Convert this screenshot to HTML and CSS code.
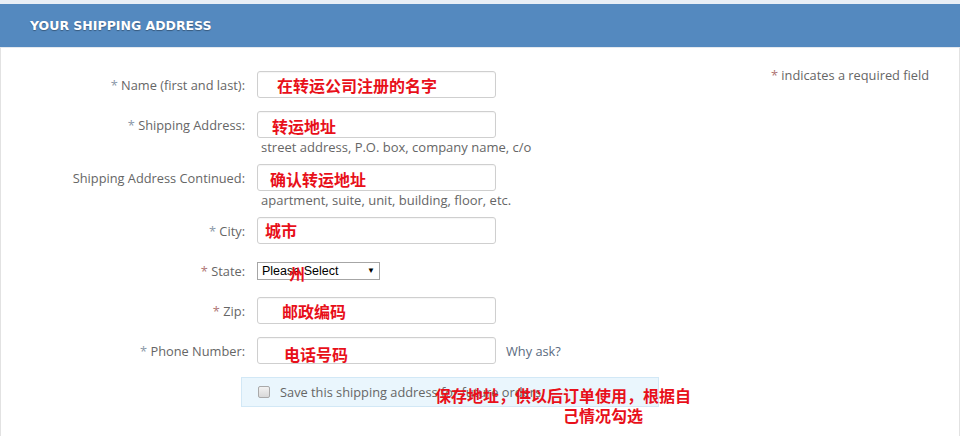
FILE: index.html
```html
<!DOCTYPE html>
<html>
<head>
<meta charset="utf-8">
<link rel="stylesheet" href="styles.css">
</head>
<body>
<div class="page">
  <div class="header">YOUR SHIPPING ADDRESS</div>
  <div class="panel">
    <div class="required-note"><span class="ast red">*</span> indicates a required field</div>
    <form class="form">
      <div class="row">
        <label class="label"><span class="ast">*</span> Name (first and last):</label>
        <div class="field">
          <div class="wrap"><input class="input" type="text"><span class="note n-name">在转运公司注册的名字</span></div>
        </div>
      </div>
      <div class="row">
        <label class="label"><span class="ast">*</span> Shipping Address:</label>
        <div class="field">
          <div class="wrap"><input class="input" type="text"><span class="note n-addr">转运地址</span></div>
          <div class="hint">street address, P.O. box, company name, c/o</div>
        </div>
      </div>
      <div class="row">
        <label class="label">Shipping Address Continued:</label>
        <div class="field">
          <div class="wrap"><input class="input" type="text"><span class="note n-cont">确认转运地址</span></div>
          <div class="hint">apartment, suite, unit, building, floor, etc.</div>
        </div>
      </div>
      <div class="row">
        <label class="label"><span class="ast">*</span> City:</label>
        <div class="field">
          <div class="wrap"><input class="input" type="text"><span class="note n-city">城市</span></div>
        </div>
      </div>
      <div class="row">
        <label class="label"><span class="ast red">*</span> State:</label>
        <div class="field field-select">
          <div class="wrap">
            <div class="select"><span class="select-text">Please Select</span><span class="arrow">▼</span></div>
            <span class="note n-state">州</span>
          </div>
        </div>
      </div>
      <div class="row">
        <label class="label"><span class="ast red">*</span> Zip:</label>
        <div class="field">
          <div class="wrap"><input class="input" type="text"><span class="note n-zip">邮政编码</span></div>
        </div>
      </div>
      <div class="row">
        <label class="label"><span class="ast">*</span> Phone Number:</label>
        <div class="field field-inline">
          <div class="wrap"><input class="input" type="text"><span class="note n-phone">电话号码</span></div>
          <a class="why">Why ask?</a>
        </div>
      </div>
      <div class="save">
        <span class="checkbox"></span>
        <span class="save-text">Save this shipping address for future orders.</span>
        <span class="note n-save"><span class="l1">保存地址，供以后订单使用，根据自</span><span class="l2">己情况勾选</span></span>
      </div>
    </form>
  </div>
</div>
</body>
</html>
```

FILE: styles.css
```css
* { box-sizing: border-box; }
html, body { margin: 0; padding: 0; background: #fff; }
body { font-family: "Open Sans", "DejaVu Sans", sans-serif; font-size: 12.8px; color: #666; }

.page { width: 960px; height: 436px; background: #e8eef5; padding-top: 4px; overflow: hidden; }

.header {
  height: 43px;
  background: #5489bf;
  color: #fff;
  font-family: "DejaVu Sans", Verdana, sans-serif;
  font-weight: bold;
  font-size: 12.5px;
  line-height: 43px;
  padding-left: 30px;
  text-shadow: 0 1px 1px rgba(0,0,0,0.35);
}

.panel {
  position: relative;
  background: #fff;
  border-left: 1px solid #e2e2e2;
  border-right: 1px solid #e2e2e2;
  border-top: 1px solid #e4e9ef;
  height: 389px;
  padding-top: 23px;
}

.required-note {
  position: absolute;
  right: 30px;
  top: 18px;
  color: #666;
}

.ast { color: #8b98a8; }
.ast.red { color: #b07676; }

.form { display: flex; flex-direction: column; gap: 13px; }

.row { display: flex; align-items: flex-start; }

.label {
  width: 245px;
  text-align: right;
  line-height: 29px;
  height: 27px;
  padding-right: 1px;
  color: #666;
  white-space: nowrap;
}

.field { margin-left: 11px; display: flex; flex-direction: column; }
.field-inline { flex-direction: row; align-items: center; }
.field-select { height: 27px; justify-content: center; }

.wrap { position: relative; }

.input {
  display: block;
  width: 239px;
  height: 27px;
  border: 1px solid #cfcfcf;
  border-radius: 3px;
  background: #fff;
  margin: 0;
  padding: 0;
  box-shadow: inset 0 1px 1px rgba(0,0,0,0.04);
}

.hint { height: 13px; line-height: 18px; padding-left: 4px; color: #666; white-space: nowrap; font-size: 13px; }

.why { margin-left: 10px; color: #5b6b80; }

.select {
  display: flex;
  align-items: center;
  justify-content: space-between;
  width: 123px;
  height: 18px;
  border: 1px solid #a6a6a6;
  background: #fff;
  font-family: "Liberation Sans", Arial, sans-serif;
  font-size: 12.5px;
  color: #000;
  padding: 0 4px 0 4px;
}
.arrow { font-size: 8px; line-height: 1; }

.note {
  position: absolute;
  font-family: "Noto Sans CJK SC", sans-serif;
  font-weight: bold;
  font-size: 16px;
  line-height: 20px;
  color: #e8101a;
  white-space: nowrap;
  pointer-events: none;
}
.n-name { left: 20px; top: 4px; }
.n-addr { left: 15px; top: 5px; }
.n-cont { left: 13px; top: 5px; }
.n-city { left: 8px; top: 3px; }
.n-state { left: 32px; top: 1px; }
.n-zip { left: 25px; top: 4px; }
.n-phone { left: 27px; top: 7px; }

.save {
  position: relative;
  margin-left: 240px;
  width: 418px;
  height: 30px;
  background: #eaf6fd;
  border: 1px solid #d2e8f6;
  display: flex;
  align-items: center;
  padding-left: 16px;
}
.checkbox {
  width: 12px;
  height: 12px;
  border: 1px solid #a9a9a9;
  border-radius: 2px;
  background: linear-gradient(#f2f2f2, #d8d8d8);
  margin-right: 10px;
}
.save-text { color: #666; }
.n-save { left: 193px; top: 7px; }
.n-save .l1, .n-save .l2 { display: block; }
.n-save .l2 { margin-left: 128px; }
```
